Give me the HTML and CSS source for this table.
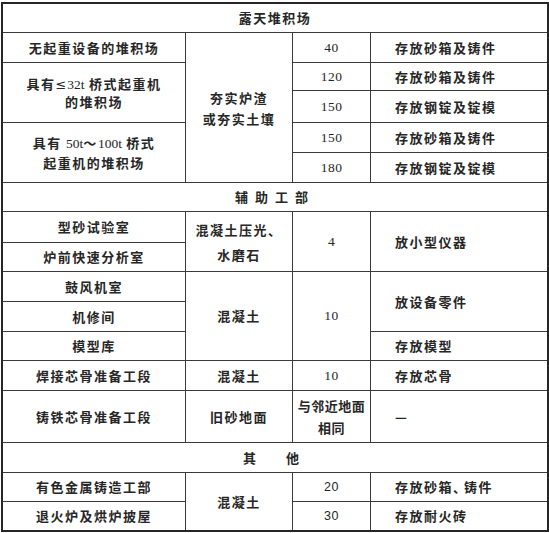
FILE: index.html
```html
<!DOCTYPE html>
<html lang="zh-CN">
<head>
<meta charset="utf-8">
<title>地面做法表</title>
<link rel="stylesheet" href="styles.css">
</head>
<body>
<div class="table">
  <div class="cell head h1">露天堆积场</div>

  <div class="cell c1 r2">无起重设备的堆积场</div>
  <div class="cell c2 r2-6 lh21"><span class="in">夯实炉渣<br>或夯实土壤</span></div>
  <div class="cell c3 r2 num">40</div>
  <div class="cell c4 r2">存放砂箱及铸件</div>

  <div class="cell c1 r3-4 lh17"><span class="in">具有<span class="sym">≤</span><span class="lat">32t</span> 桥式起重机<br>的堆积场</span></div>
  <div class="cell c3 r3 num">120</div>
  <div class="cell c4 r3">存放砂箱及铸件</div>
  <div class="cell c3 r4 num">150</div>
  <div class="cell c4 r4">存放钢锭及锭模</div>

  <div class="cell c1 r5-6 lh19"><span class="in">具有 <span class="lat">50t</span>～<span class="lat">100t</span> 桥式<br>起重机的堆积场</span></div>
  <div class="cell c3 r5 num">150</div>
  <div class="cell c4 r5">存放砂箱及铸件</div>
  <div class="cell c3 r6 num">180</div>
  <div class="cell c4 r6">存放钢锭及锭模</div>

  <div class="cell head h7">辅助工部</div>

  <div class="cell c1 r8">型砂试验室</div>
  <div class="cell c2 r8-9 lh25"><span class="in">混凝土压光、<br>水磨石</span></div>
  <div class="cell c3 r8-9 num">4</div>
  <div class="cell c4 r8-9">放小型仪器</div>
  <div class="cell c1 r9">炉前快速分析室</div>

  <div class="cell c1 r10">鼓风机室</div>
  <div class="cell c2 r10-12">混凝土</div>
  <div class="cell c3 r10-12 num">10</div>
  <div class="cell c4 r10-11">放设备零件</div>
  <div class="cell c1 r11">机修间</div>
  <div class="cell c1 r12">模型库</div>
  <div class="cell c4 r12">存放模型</div>

  <div class="cell c1 r13">焊接芯骨准备工段</div>
  <div class="cell c2 r13">混凝土</div>
  <div class="cell c3 r13 num">10</div>
  <div class="cell c4 r13">存放芯骨</div>

  <div class="cell c1 r14">铸铁芯骨准备工段</div>
  <div class="cell c2 r14">旧砂地面</div>
  <div class="cell c3 r14 lh22 tight"><span class="in">与邻近地面<br>相同</span></div>
  <div class="cell c4 r14">—</div>

  <div class="cell head h15">其他</div>

  <div class="cell c1 r16">有色金属铸造工部</div>
  <div class="cell c2 r16-17">混凝土</div>
  <div class="cell c3 r16 num sans">20</div>
  <div class="cell c4 r16"><span class="in">存放砂箱<span class="dun">、</span>铸件</span></div>
  <div class="cell c1 r17">退火炉及烘炉披屋</div>
  <div class="cell c3 r17 num sans">30</div>
  <div class="cell c4 r17">存放耐火砖</div>
</div>
</body>
</html>
```

FILE: styles.css
```css
html, body {
  margin: 0;
  padding: 0;
  background: #ffffff;
}

body {
  font-family: "Noto Sans CJK SC", "Liberation Serif", sans-serif;
  font-size: 13px;
  font-weight: 700;
  color: #262626;
}

.table {
  margin: 2px 0 0 1px;
  width: 548px;
  box-sizing: border-box;
  border: 2px solid #262626;
  background: #3a3a3a;
  display: grid;
  grid-template-columns: 182px 106px 77px 176px;
  grid-template-rows: 28px 29px 27px 31px 29px 29px 28px 30px 28px 29px 29px 28px 29px 51px 29px 28px 28px;
  gap: 1px;
}

.cell {
  background: #ffffff;
  display: flex;
  align-items: center;
  justify-content: center;
  text-align: center;
  letter-spacing: 1.5px;
  line-height: 16px;
  white-space: nowrap;
}

.in {
  display: block;
}

.c1 { grid-column: 1; }
.c2 { grid-column: 2; }
.c3 { grid-column: 3; }
.c4 {
  grid-column: 4;
  justify-content: flex-start;
  text-align: left;
  padding-left: 24px;
}

.head { grid-column: 1 / 5; }
.h1 { grid-row: 1; }
.h7 { grid-row: 7; letter-spacing: 7px; }
.h15 { grid-row: 15; letter-spacing: 30px; padding-left: 22px; }

.r2 { grid-row: 2; }
.r3 { grid-row: 3; }
.r4 { grid-row: 4; }
.r5 { grid-row: 5; }
.r6 { grid-row: 6; }
.r8 { grid-row: 8; }
.r9 { grid-row: 9; }
.r10 { grid-row: 10; }
.r11 { grid-row: 11; }
.r12 { grid-row: 12; }
.r13 { grid-row: 13; }
.r14 { grid-row: 14; }
.r16 { grid-row: 16; }
.r17 { grid-row: 17; }
.r2-6 { grid-row: 2 / 7; }
.r3-4 { grid-row: 3 / 5; }
.r5-6 { grid-row: 5 / 7; }
.r8-9 { grid-row: 8 / 10; }
.r10-12 { grid-row: 10 / 13; }
.r10-11 { grid-row: 10 / 12; }
.r16-17 { grid-row: 16 / 18; }

.lh17 { line-height: 17px; }
.lh19 { line-height: 19px; }
.lh21 { line-height: 21px; }
.lh22 { line-height: 22px; }
.lh25 { line-height: 25px; }

.tight { letter-spacing: 0.5px; }

.num {
  font-family: "Liberation Serif", serif;
  font-size: 13.5px;
  font-weight: 400;
  letter-spacing: 0.5px;
}

.sans {
  font-family: "Liberation Sans", sans-serif;
  font-size: 12.5px;
}

.lat {
  font-family: "Liberation Serif", serif;
  font-size: 13.5px;
  font-weight: 400;
  letter-spacing: 0;
}

.sym {
  font-family: "DejaVu Sans", sans-serif;
  font-weight: 400;
  letter-spacing: 0;
  margin-right: 1px;
}

.dun {
  letter-spacing: -2px;
}
```
